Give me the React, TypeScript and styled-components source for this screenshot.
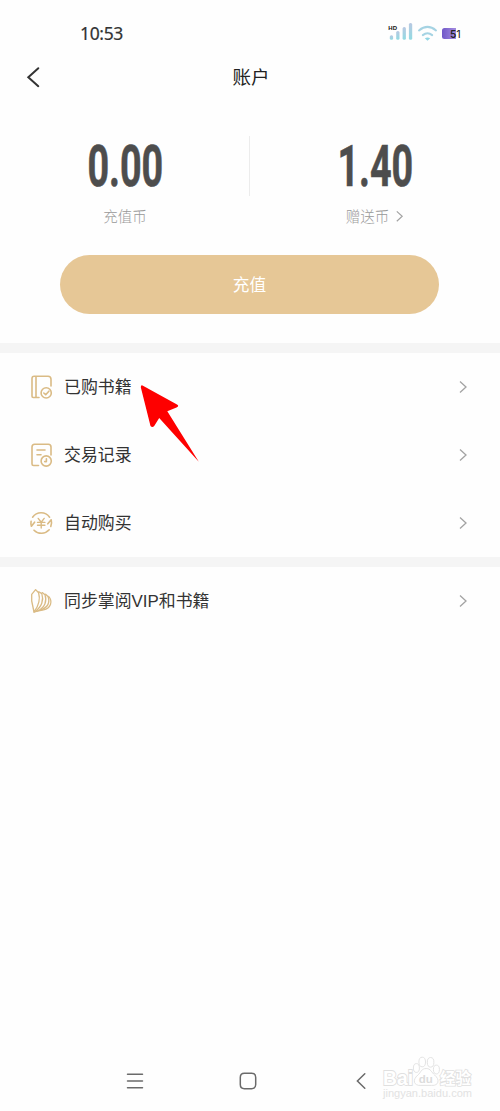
import React from 'react';
import styled, { createGlobalStyle } from 'styled-components';

const GlobalStyle = createGlobalStyle`
  * { box-sizing: border-box; }
  body {
    margin: 0;
    background: #fefefe;
    color: #333;
    font-family: "Noto Sans CJK SC", sans-serif;
  }
`;

const Screen = styled.div`
  position: relative;
  display: flex;
  flex-direction: column;
  width: 500px;
  height: 1111px;
  overflow: hidden;
  background: #fefefe;
`;

const StatusBar = styled.header`
  display: flex;
  align-items: flex-start;
  justify-content: space-between;
  height: 48px;
  padding: 20px 38px 0 80px;
`;

const Clock = styled.span`
  font: 400 17.5px/26px "Noto Sans", sans-serif;
  letter-spacing: -0.35px;
  color: #333;
  -webkit-text-stroke: 0.2px #333;
`;

const TitleBar = styled.div`
  display: grid;
  grid-template-columns: 60px 1fr 60px;
  align-items: center;
  height: 58px;

  svg { margin-left: 26px; }
`;

const Title = styled.h1`
  margin: 0;
  padding: 0 0 2px 2px;
  text-align: center;
  font-size: 18.5px;
  font-weight: 400;
  line-height: 28px;
  color: #222;
`;

const Balances = styled.section`
  display: flex;
  height: 149px;
  padding-top: 30px;
`;

const Balance = styled.div`
  display: flex;
  flex-direction: column;
  align-items: center;
  width: 250px;
`;

const Separator = styled.div`
  width: 1px;
  height: 60px;
  margin: 0 0 0 -1px;
  background: #ececec;
`;

const Amount = styled.div`
  height: 60px;
  font: 700 58px/60px Roboto, sans-serif;
  color: #4d4d4d;
  -webkit-text-stroke: 0.6px #4d4d4d;
  transform: scaleX(0.65);
`;

const Caption = styled.div`
  display: flex;
  align-items: center;
  gap: 6px;
  margin-top: 9px;
  font-size: 14.5px;
  line-height: 22px;
  font-weight: 300;
  color: #999;
`;

const TopUpButton = styled.button`
  align-self: center;
  width: 379px;
  height: 59px;
  margin: 0 1px 29px 0;
  padding: 0 0 2px;
  border: 0;
  border-radius: 30px;
  background: #e6c796;
  color: #fff;
  font: 400 16.7px/24px "Noto Sans CJK SC", sans-serif;
`;

const Band = styled.div`
  height: 10px;
  background: #f5f5f5;
`;

const Menu = styled.nav`
  display: flex;
  flex-direction: column;
`;

const Row = styled.div`
  display: flex;
  align-items: center;
  height: 68px;
  padding: 0 32px 0 29px;
`;

const RowLabel = styled.span`
  flex: 1;
  margin-left: 11px;
  padding-top: 2px;
  font-family: "Liberation Sans", "Noto Sans CJK SC", sans-serif;
  font-size: 16.9px;
  line-height: 26px;
  color: #333;
`;

const NavBar = styled.footer`
  display: flex;
  align-items: center;
  justify-content: space-between;
  height: 30px;
  margin-top: auto;
  margin-bottom: 15px;
  padding: 0 127px 0 123px;
`;

const Pointer = styled.svg`
  position: absolute;
  left: 138px;
  top: 382px;
`;

const Watermark = styled.svg`
  position: absolute;
  left: 378px;
  top: 1050px;
`;

const Chevron = ({ size = 1 }: { size?: number }) => (
  <svg width={10 * size} height={14 * size} viewBox="0 0 10 14" fill="none" stroke="#a3a3a3" strokeWidth="1.3">
    <path d="M2 1.5 8 7 2 12.5" />
  </svg>
);

const GoldIcon = ({ children }: { children: React.ReactNode }) => (
  <svg width="24" height="26" viewBox="0 0 24 26" fill="none" stroke="#dabb85" strokeWidth="1.6" strokeLinecap="round" strokeLinejoin="round">
    {children}
  </svg>
);

const BookIcon = () => (
  <GoldIcon>
    <path d="M10 23.5H4.2q-1.2 0-1.2-1.2V4.5Q3 2.3 5.2 2.3H19q3 0 3 3V12M7 2.3v21" />
    <circle cx="17.2" cy="18.9" r="5.1" />
    <path d="m14.8 19 1.9 1.7 3.2-3.5" />
  </GoldIcon>
);

const RecordIcon = () => (
  <GoldIcon>
    <path d="M9.5 23.5H4.6Q3 23.5 3 21.9V5Q3 2.3 5.7 2.3h13.6Q22 2.3 22 5v8M8 8h8M8 12.8h4" />
    <circle cx="17.2" cy="19" r="5.1" />
    <path d="M17.4 16.8v2.8H15.7" />
  </GoldIcon>
);

const AutoBuyIcon = () => (
  <GoldIcon>
    <path d="M3.6 7.2a10.4 10.4 0 0 1 17 0M5 20.2a10.4 10.4 0 0 0 15.2-.4M2.4 16.2a10.3 10.3 0 0 1-.3-5M2.4 16.2l3.2-4M22.2 9.8a10.3 10.3 0 0 1-.4 6.6M22.2 9.8l-3.4 4" />
    <path d="M9.2 8.4l3 3.8 3-3.8M8.5 12.4h7.4M8.5 15.3h7.4M12.2 12.4v5.6" strokeWidth="1.4" />
  </GoldIcon>
);

const SyncIcon = () => (
  <GoldIcon>
    <g strokeWidth="1.3">
      <path d="M5 24 2.7 13 2.7 6.3 6.6 1.6 9.6 4.8C11.4 11 9.6 18 5 24Z" />
      <path d="M9.8 3.8 12.8 5.6C15 12 12.8 19 6 23.6" />
      <path d="M13.2 4.6 16 6.8C18.2 13 16 19.5 8.4 23" />
      <path d="M16.6 6.2 19 8.4C21 14 19 19.5 11 22.4" />
      <path d="M19.6 8.4C24.2 13.5 21.6 20.5 14.6 21.8 10.6 22.4 8 23.2 5 24" />
    </g>
  </GoldIcon>
);

const StatusIcons = () => (
  <svg width="76" height="24" viewBox="386 20 76 24">
    <defs>
      <linearGradient id="signal" x1="0" y1="0" x2="0" y2="1">
        <stop stopColor="#b9c8e2" />
        <stop offset="1" stopColor="#91dbe2" />
      </linearGradient>
      <linearGradient id="battery">
        <stop stopColor="#7158c8" />
        <stop offset="1" stopColor="#a48ce0" />
      </linearGradient>
    </defs>
    <text x="388.3" y="29.8" fontFamily="Liberation Sans" fontWeight="700" fontSize="6" fill="#111">HD</text>
    <g fill="url(#signal)">
      <rect x="389.8" y="35.3" width="3.3" height="4.5" rx="1.5" />
      <rect x="396.2" y="31" width="3.3" height="8.8" rx="1.5" />
      <rect x="402.6" y="27" width="3.3" height="12.8" rx="1.5" />
      <rect x="408.9" y="23" width="3.3" height="16.8" rx="1.5" />
    </g>
    <g fill="none" stroke="#a5d3e3" strokeWidth="2" strokeLinecap="round">
      <path d="M419 30.4q8.5-7 17 0M422.8 35.1q4.7-3.8 9.4 0" />
    </g>
    <path d="M424.8 38.2q2.7-1.5 5.4 0l-2.7 2.5Z" fill="#91d5e4" />
    <path d="M444.5 28H456v11h-11.5q-2.5 0-2.5-2.5v-6q0-2.5 2.5-2.5Z" fill="url(#battery)" />
    <text x="450" y="38" fontFamily="Inter" fontSize="11" fill="#222"><tspan fontWeight="600" textLength="6.3" lengthAdjust="spacingAndGlyphs">5</tspan><tspan x="456.3">1</tspan></text>
  </svg>
);

const NavIcon = ({ d }: { d: string }) => (
  <svg width="24" height="24" viewBox="0 0 24 24" fill="none" stroke="#6a6a6a" strokeWidth="1.5" strokeLinecap="round">
    <path d={d} />
  </svg>
);

const menuItems = [
  { label: '已购书籍', Icon: BookIcon },
  { label: '交易记录', Icon: RecordIcon },
  { label: '自动购买', Icon: AutoBuyIcon },
];

const MenuRow = ({ label, Icon }: { label: string; Icon: React.ComponentType }) => (
  <Row>
    <Icon />
    <RowLabel>{label}</RowLabel>
    <Chevron />
  </Row>
);

export default function App() {
  return (
    <>
      <GlobalStyle />
      <Screen>
        <StatusBar>
          <Clock>10:53</Clock>
          <StatusIcons />
        </StatusBar>
        <TitleBar>
          <svg width="14" height="22" viewBox="0 0 14 22" fill="none" stroke="#333" strokeWidth="2" strokeLinecap="round">
            <path d="M12.3 2.2 2.3 11.2 12.3 20.2" />
          </svg>
          <Title>账户</Title>
        </TitleBar>
        <Balances>
          <Balance>
            <Amount>0.00</Amount>
            <Caption>充值币</Caption>
          </Balance>
          <Separator />
          <Balance>
            <Amount>1.40</Amount>
            <Caption>赠送币 <Chevron size={0.9} /></Caption>
          </Balance>
        </Balances>
        <TopUpButton>充值</TopUpButton>
        <Band />
        <Menu>
          {menuItems.map((item) => <MenuRow key={item.label} {...item} />)}
        </Menu>
        <Band />
        <Menu>
          <MenuRow label="同步掌阅VIP和书籍" Icon={SyncIcon} />
        </Menu>
        <NavBar>
          <NavIcon d="M4.5 5.3h15M4.5 12h15M4.5 18.7h15" />
          <NavIcon d="M8.4 4.3h7.2q4.1 0 4.1 4.1v7.2q0 4.1-4.1 4.1H8.4q-4.1 0-4.1-4.1V8.4q0-4.1 4.1-4.1Z" />
          <NavIcon d="M15.8 4.8 8.4 12l7.4 7.2" />
        </NavBar>
        <Pointer width="64" height="84" viewBox="138 382 64 84">
          <path d="M142.5 385.4 177 404.6q2.6 1.7-.5 3L167.3 411.3 198.8 461.7 159.2 418 154.2 426q-1.8 2-3.7 0L140.8 387.2q0-2.4 1.7-1.8Z" fill="#fe0000" />
        </Pointer>
        <Watermark width="100" height="54" viewBox="378 1050 100 54" fill="#fff" stroke="#e0e0e0" strokeWidth="0.9">
          <text x="383" y="1085" fontFamily="Liberation Sans" fontWeight="700" fontSize="20" strokeWidth="1.8" paintOrder="stroke" textLength="30" lengthAdjust="spacingAndGlyphs">Bai</text>
          <ellipse cx="416.4" cy="1068" rx="3" ry="4.4" />
          <ellipse cx="422.2" cy="1062" rx="3.3" ry="4.8" />
          <ellipse cx="430.6" cy="1062.3" rx="3.3" ry="4.8" />
          <ellipse cx="436.4" cy="1069.5" rx="3" ry="4.4" />
          <path d="M426.2 1068.5c-5 0-5.2 4-8.3 6.5-6 5-4 11 3 10.4h10.8c7 .5 8.5-5.6 3-10.3-3.3-2.8-4-6.6-8.5-6.6Z" />
          <text x="418.8" y="1083" fontFamily="Liberation Sans" fontWeight="700" fontSize="11.5" fill="#dcdcdc" stroke="none">du</text>
          <text x="440" y="1083.5" fontFamily="Noto Sans CJK SC" fontWeight="700" fontSize="15.5" strokeWidth="1.6" paintOrder="stroke">经验</text>
          <text x="383" y="1097" fontFamily="Liberation Sans" fontSize="10.5" fill="#e2e2e2" stroke="none" textLength="89" lengthAdjust="spacingAndGlyphs">jingyan.baidu.com</text>
        </Watermark>
      </Screen>
    </>
  );
}
